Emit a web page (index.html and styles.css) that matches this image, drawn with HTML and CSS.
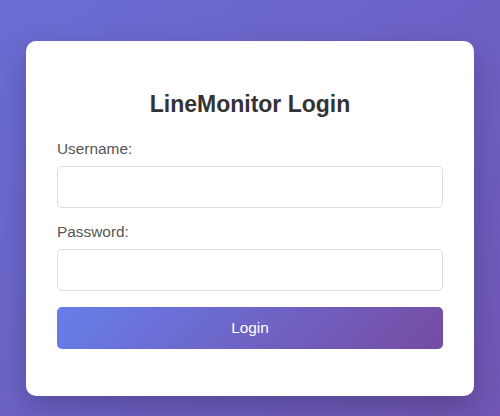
FILE: index.html
```html
<!DOCTYPE html>
<html lang="en">
<head>
<meta charset="utf-8">
<title>LineMonitor Login</title>
<link rel="stylesheet" href="styles.css">
</head>
<body>
<main class="page">
  <div class="card">
    <h2 class="title">LineMonitor Login</h2>
    <form class="form">
      <div class="group">
        <label class="label" for="username">Username:</label>
        <input class="input" type="text" id="username">
      </div>
      <div class="group">
        <label class="label" for="password">Password:</label>
        <input class="input" type="password" id="password">
      </div>
      <button class="btn" type="button">Login</button>
    </form>
  </div>
</main>
</body>
</html>
```
FILE: styles.css
```css
html, body {
  margin: 0;
  padding: 0;
  height: 100%;
}
body {
  background: linear-gradient(135deg, #6b6dd3 0%, #6c62c7 50%, #7156b4 100%);
  font-family: "Liberation Sans", Arial, sans-serif;
  overflow: hidden;
}
.page {
  display: flex;
  justify-content: center;
  padding-top: 41px;
}
.card {
  width: 448px;
  box-sizing: border-box;
  background: #fff;
  border-radius: 10px;
  padding: 30px 31px 47px;
  box-shadow: 0 12px 30px rgba(0, 0, 0, 0.22);
}
.title {
  margin: 20px 0 22px;
  text-align: center;
  font-size: 23px;
  font-weight: bold;
  color: #333;
}
.group {
  margin-bottom: 15px;
}
.label {
  display: block;
  margin-bottom: 8px;
  font-size: 15.4px;
  color: #555;
}
.input {
  display: block;
  width: 100%;
  box-sizing: border-box;
  height: 42px;
  border: 1px solid #ddd;
  border-radius: 5px;
  padding: 10px;
  font-size: 16px;
}
.btn {
  display: block;
  width: 100%;
  height: 42px;
  margin-top: 16px;
  border: none;
  border-radius: 5px;
  background: linear-gradient(135deg, #667eea 0%, #764ba2 100%);
  color: #fff;
  font-family: "Liberation Sans", Arial, sans-serif;
  font-size: 15.4px;
  cursor: pointer;
}
.group + .btn {
  margin-top: 16px;
}
.form .group:last-of-type {
  margin-bottom: 0;
}
```
